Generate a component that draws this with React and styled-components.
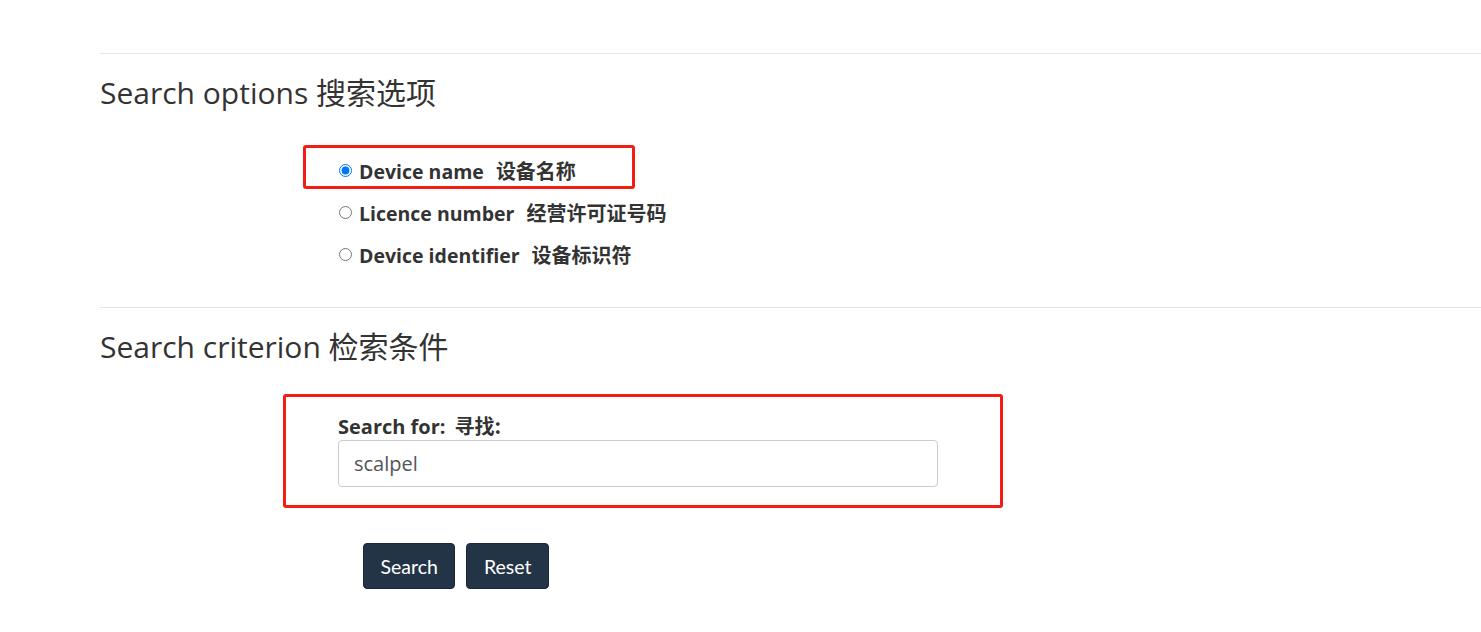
import styled, { createGlobalStyle } from "styled-components";

const GlobalStyle = createGlobalStyle`
  body {
    margin: 0;
    background: #fff;
    font-family: "Open Sans", "Noto Sans CJK SC", sans-serif;
    color: #333;
  }
`;

const options = [
  { id: "name", label: "Device name", zh: "设备名称" },
  { id: "licence", label: "Licence number", zh: "经营许可证号码" },
  { id: "udi", label: "Device identifier", zh: "设备标识符" },
];

const App = () => {
  return (
    <Page>
      <GlobalStyle />
      <Rule />
      <Heading>Search options 搜索选项</Heading>
      <OptionList>
        {options.map((opt, i) => (
          <OptionRow key={opt.id}>
            {i === 0 && <Highlight />}
            <Radio type="radio" name="field" defaultChecked={i === 0} />
            <OptionText>
              {opt.label}
              <Zh>{opt.zh}</Zh>
            </OptionText>
          </OptionRow>
        ))}
      </OptionList>
      <Rule $top={32} />
      <Heading>Search criterion 检索条件</Heading>
      <CriterionBox>
        <Label htmlFor="q">
          Search for:<Zh $gap={9}>寻找:</Zh>
        </Label>
        <Input id="q" defaultValue="scalpel" />
      </CriterionBox>
      <Buttons>
        <Button>Search</Button>
        <Button>Reset</Button>
      </Buttons>
    </Page>
  );
};

export default App;

const Page = styled.div`
  padding: 53px 0 40px 100px;
`;

const Rule = styled.hr`
  margin: ${(p) => p.$top || 0}px 0 0;
  border: 0;
  border-top: 1px solid #e5e5e5;
`;

const Heading = styled.h2`
  margin: 21px 0 0;
  font-size: 30px;
  font-weight: 400;
  line-height: 36px;
  color: #333;
`;

const OptionList = styled.div`
  display: flex;
  flex-direction: column;
  margin: 38px 0 0 239px;
`;

const OptionRow = styled.label`
  position: relative;
  display: flex;
  align-items: center;
  gap: 7px;
  height: 42px;
`;

const Highlight = styled.span`
  position: absolute;
  left: -36px;
  top: -4px;
  width: 332px;
  height: 44px;
  box-sizing: border-box;
  border: 3px solid #f31d14;
  border-radius: 3px;
  pointer-events: none;
`;

const Radio = styled.input`
  margin: 0;
  width: 13px;
  height: 13px;
`;

const OptionText = styled.span`
  font-size: 19.5px;
  font-weight: 700;
  color: #333;
`;

const Zh = styled.span`
  margin-left: ${(p) => p.$gap || 12}px;
  font-family: "Noto Sans CJK SC", sans-serif;
  font-size: 20px;
  font-weight: 700;
`;

const CriterionBox = styled.div`
  display: flex;
  flex-direction: column;
  width: 720px;
  box-sizing: border-box;
  margin: 29px 0 0 183px;
  padding: 16px 0 18px 52px;
  border: 3px solid #f31d14;
  border-radius: 3px;
`;

const Label = styled.label`
  font-size: 20px;
  line-height: 26px;
  font-weight: 700;
  color: #333;
`;

const Input = styled.input`
  width: 600px;
  height: 47px;
  box-sizing: border-box;
  padding: 0 15px;
  border: 1px solid #ccc;
  border-radius: 4px;
  font-family: "Open Sans", sans-serif;
  font-size: 20px;
  color: #555;
  outline: none;
`;

const Buttons = styled.div`
  display: flex;
  gap: 11px;
  margin: 35px 0 0 263px;
`;

const Button = styled.button`
  height: 46px;
  padding: 0 16.5px;
  border: 1px solid #1b2736;
  border-radius: 4px;
  background: #243447;
  color: #fff;
  font-family: Lato, sans-serif;
  font-size: 19.5px;
  cursor: pointer;
`;
